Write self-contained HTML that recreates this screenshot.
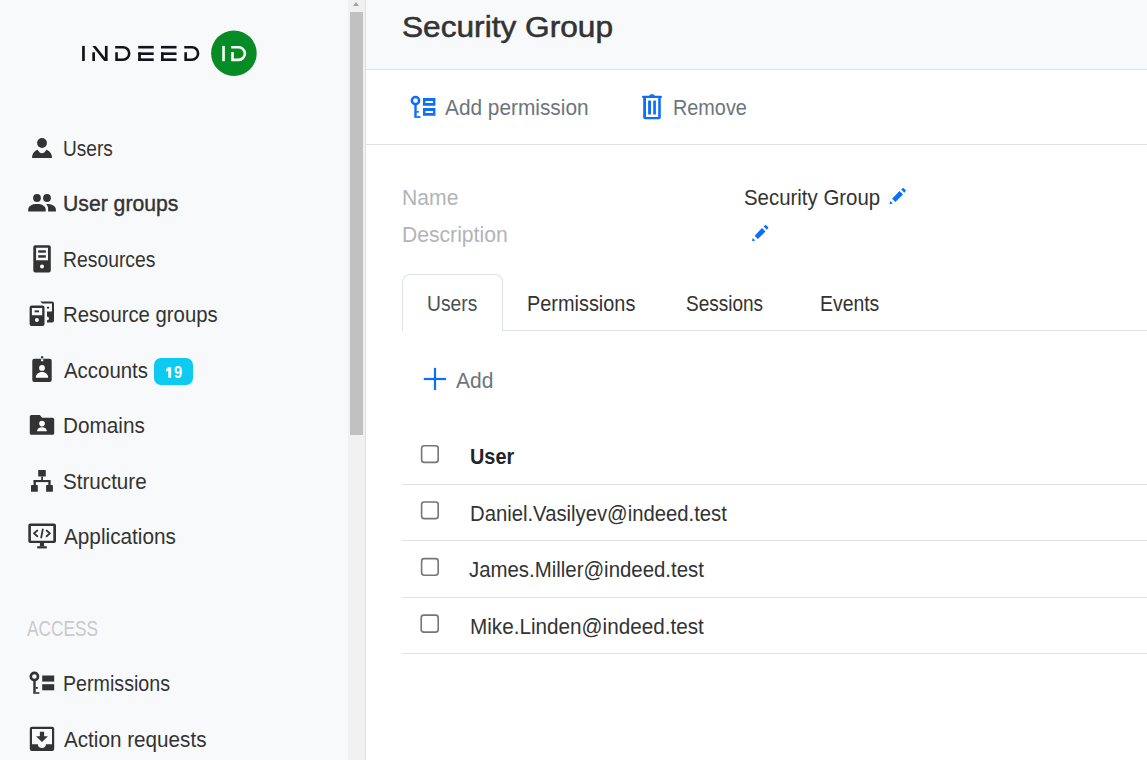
<!DOCTYPE html>
<html><head><meta charset="utf-8"><style>
html,body{margin:0;padding:0;}
body{width:1147px;height:760px;overflow:hidden;position:relative;background:#fff;font-family:"Liberation Sans", sans-serif;}
.t{position:absolute;white-space:nowrap;transform-origin:0 0;}
.b{position:absolute;}
</style></head><body>
<div class="b" style="left:0;top:0;width:348px;height:760px;background:#f8f9fa"></div>
<div class="b" style="left:348px;top:0;width:17px;height:760px;background:#f1f1f1"></div>
<div class="b" style="left:350px;top:12px;width:13px;height:423px;background:#c1c1c1"></div>
<div class="b" style="left:353px;top:2px;width:0;height:0;border-left:3.5px solid transparent;border-right:3.5px solid transparent;border-bottom:4px solid #a3a3a3"></div>
<div class="b" style="left:365px;top:0;width:1px;height:760px;background:#dee2e6"></div>
<div class="b" style="left:366px;top:0;width:781px;height:69px;background:#f8f9fa;border-bottom:1px solid #dee2e6"></div>
<div class="b" style="left:366px;top:144px;width:781px;height:1px;background:#dee2e6"></div>
<div class="b" style="left:402px;top:330px;width:745px;height:1px;background:#dee2e6"></div>
<div class="b" style="left:402px;top:274px;width:99px;height:56px;background:#fff;border:1px solid #dee2e6;border-bottom:none;border-radius:8px 8px 0 0"></div>
<div class="b" style="left:154px;top:358px;width:39px;height:27px;background:#0dcaf0;border-radius:7px"></div>
<div class="b" style="left:402px;top:484px;width:745px;height:1px;background:#dee2e6"></div>
<div class="b" style="left:402px;top:540px;width:745px;height:1px;background:#dee2e6"></div>
<div class="b" style="left:402px;top:597px;width:745px;height:1px;background:#dee2e6"></div>
<div class="b" style="left:402px;top:653px;width:745px;height:1px;background:#dee2e6"></div>
<svg class="b" style="left:0;top:0" width="1147" height="760" viewBox="0 0 1147 760">
<g fill="#333333">
 <!-- Users -->
 <circle cx="42" cy="143" r="4.9"/>
 <path d="M32.1 158 C32.1 153.8 34.3 151 37.6 149.8 C39 152.2 40.4 153.3 42 153.3 C43.6 153.3 45 152.2 46.4 149.8 C49.7 151 52 153.8 52 158 Z"/>
 <!-- User groups -->
 <circle cx="37" cy="198" r="3.9"/>
 <circle cx="47" cy="198" r="3.9"/>
 <path d="M28.2 211.6 L28.2 209.5 C28.2 206 32 204 37 204 C42 204 45.7 206 45.7 209.5 L45.7 211.6 Z"/>
 <path d="M46.1 204 C52 204 55.9 206 55.9 209.5 L55.9 211.6 L48.1 211.6 L48.1 209 C48.1 207 47.4 205.3 46.1 204 Z"/>
 <!-- Resources -->
 <path fill-rule="evenodd" d="M35.3 245.2 H48.8 Q50.8 245.2 50.8 247.2 V270.6 Q50.8 272.6 48.8 272.6 H35.3 Q33.3 272.6 33.3 270.6 V247.2 Q33.3 245.2 35.3 245.2 Z M36.1 247.8 V260.3 H48 V247.8 Z"/>
 <rect x="38.2" y="250.3" width="7.6" height="2.4"/>
 <rect x="38.2" y="255.2" width="7.6" height="2.5"/>
</g>
<circle cx="42" cy="266.4" r="2" fill="#fff"/>
<g fill="#333333">
 <!-- Resource groups back -->
 <path d="M40.3 301.6 H52 Q54 301.6 54 303.6 V320.6 Q54 322.6 52 322.6 H47 V303.5 H42.3 Z"/>
 <!-- front -->
 <path fill-rule="evenodd" d="M31.6 305.4 H42.5 Q44.5 305.4 44.5 307.4 V324 Q44.5 326 42.5 326 H31.6 Q29.6 326 29.6 324 V307.4 Q29.6 305.4 31.6 305.4 Z M31.9 307.9 V315.3 H42.2 V307.9 Z"/>
 <rect x="34.6" y="310.4" width="4.4" height="1.9"/>
</g>
<rect x="47" y="303.5" width="4.9" height="8" fill="#fff"/>
<rect x="47" y="306.8" width="2.2" height="1.8" fill="#333333"/>
<circle cx="36.9" cy="320.1" r="2" fill="#fff"/>
<path d="M47 316.5 A1.9 1.9 0 0 1 47 320.3 Z" fill="#fff"/>
<g fill="#333333">
 <!-- Accounts -->
 <rect x="32.3" y="358.7" width="19.4" height="23.3" rx="2"/>
 <rect x="41" y="356.2" width="2.2" height="2"/>
</g>
<rect x="41" y="359.2" width="2.2" height="2" fill="#fff"/>
<circle cx="42" cy="367.9" r="2.9" fill="#fff"/>
<path d="M35.8 377.7 C35.8 374.4 38.6 372.1 42 372.1 C45.4 372.1 48.2 374.4 48.2 377.7 Z" fill="#fff"/>
<g fill="#333333">
 <!-- Domains -->
 <path d="M31.3 415.1 H39.8 L42.2 417.7 H52.7 Q54.2 417.7 54.2 419.2 V433.2 Q54.2 434.7 52.7 434.7 H31.3 Q29.8 434.7 29.8 433.2 V416.6 Q29.8 415.1 31.3 415.1 Z"/>
</g>
<circle cx="42" cy="423.6" r="2.8" fill="#fff"/>
<path d="M37 431.3 C37 428.8 39.2 427.2 42 427.2 C44.8 427.2 46.9 428.8 46.9 431.3 Z" fill="#fff"/>
<g fill="#333333">
 <!-- Structure -->
 <rect x="38.2" y="469.9" width="7.6" height="6.7" rx="0.6"/>
 <rect x="41.2" y="476.6" width="1.8" height="3.6"/>
 <rect x="33.4" y="480" width="17.2" height="2.1"/>
 <rect x="33.6" y="482" width="2.3" height="3.1"/>
 <rect x="48.3" y="482" width="2.3" height="3.1"/>
 <rect x="31" y="485" width="6.8" height="6.8" rx="0.6"/>
 <rect x="46.1" y="485" width="6.8" height="6.8" rx="0.6"/>
 <!-- Applications -->
 <path fill-rule="evenodd" d="M30.3 523.6 H54 Q56 523.6 56 525.6 V541 Q56 543 54 543 H30.3 Q28.3 543 28.3 541 V525.6 Q28.3 523.6 30.3 523.6 Z M30.9 526 V540.8 H53.3 V526 Z"/>
 <rect x="39.9" y="543" width="4.2" height="3.3"/>
 <rect x="37.2" y="546.2" width="9.6" height="2.2"/>
</g>
<g fill="none" stroke="#333333" stroke-width="1.8" stroke-linecap="round" stroke-linejoin="round">
 <path d="M37.3 530.5 L34 533.4 L37.3 536.3"/>
 <path d="M46.6 530.5 L49.9 533.4 L46.6 536.3"/>
 <path d="M42.8 529.3 L41.2 537.5"/>
</g>
<g fill="#333333">
 <!-- Permissions -->
 <circle cx="34.4" cy="676.5" r="3.6" fill="none" stroke="#333333" stroke-width="2.6"/>
 <rect x="33.3" y="680" width="2.4" height="13.8"/>
 <rect x="35.5" y="687" width="2.3" height="1.8"/>
 <rect x="35.5" y="692.2" width="3.9" height="1.6"/>
 <rect x="42.2" y="675.5" width="12" height="6.1"/>
 <rect x="42.2" y="684.2" width="12" height="6.1"/>
 <!-- Action requests -->
 <path fill-rule="evenodd" d="M31.8 726.7 H52.2 Q54.2 726.7 54.2 728.7 V748.9 Q54.2 750.9 52.2 750.9 H31.8 Q29.8 750.9 29.8 748.9 V728.7 Q29.8 726.7 31.8 726.7 Z M32 728.9 V744.2 H37.9 A4 3.8 0 0 0 45.9 744.2 H52 V728.9 Z"/>
 <path d="M39.9 731.8 H44.1 V736.3 H47.9 L42 742.1 L36.1 736.3 H39.9 Z"/>
</g>
<g fill="#fff" stroke="#767676" stroke-width="1.6">
 <rect x="421.6" y="445.8" width="16.6" height="16.6" rx="2.6"/>
 <rect x="421.6" y="502" width="16.6" height="16.6" rx="2.6"/>
 <rect x="421.6" y="558.6" width="16.6" height="16.6" rx="2.6"/>
 <rect x="421.2" y="615.1" width="17" height="17" rx="2.6"/>
</g>
<path fill="#fff" d="M168.3 367.1 H171.2 V377.8 H168.3 V370.6 L166.1 371.8 V369.3 Z"/>
<!-- toolbar icons blue -->
<g fill="#0d6efd">
 <circle cx="415.5" cy="100.6" r="3.65" fill="none" stroke="#0d6efd" stroke-width="2.5"/>
 <rect x="414.3" y="104" width="2.4" height="13.9"/>
 <rect x="416.5" y="111" width="2.3" height="1.7"/>
 <rect x="416.5" y="116.1" width="3.9" height="1.8"/>
 <path fill-rule="evenodd" d="M423 97.9 H435.4 V105.8 H423 Z M425.4 100.9 V103.1 H433 V100.9 Z"/>
 <path fill-rule="evenodd" d="M423 108 H435.4 V115.7 H423 Z M425.4 111 V113.1 H433 V111 Z"/>
 <!-- trash -->
 <rect x="642" y="95.8" width="20" height="2.3" rx="1"/>
 <path d="M649.3 95.9 Q649.5 94.3 651 94.3 H653 Q654.5 94.3 654.7 95.9 Z"/>
 <path fill-rule="evenodd" d="M643.2 98 H660.8 V117.3 Q660.8 119.3 658.8 119.3 H645.2 Q643.2 119.3 643.2 117.3 Z M646 98 V116.9 H658.2 V98 Z"/>
 <rect x="648.1" y="100.5" width="2.9" height="14.1" rx="0.4"/>
 <rect x="653.2" y="100.5" width="2.7" height="14.1" rx="0.4"/>
 <!-- pencil 1 -->
 <path d="M890.05 201.06 L889.7 204.2 L892.9 203.4 Z"/>
 <path d="M892.1 198.7 L899.5 191.1 L903 194.4 L895.4 202 Z"/>
 <path d="M901.1 189.4 L903.2 187.8 L906 190.5 L904.4 192.7 Z"/>
 <!-- pencil 2 -->
 <g transform="translate(-137.5 37)">
 <path d="M890.05 201.06 L889.7 204.2 L892.9 203.4 Z"/>
 <path d="M892.1 198.7 L899.5 191.1 L903 194.4 L895.4 202 Z"/>
 <path d="M901.1 189.4 L903.2 187.8 L906 190.5 L904.4 192.7 Z"/>
 </g>
 <!-- plus -->
 <rect x="433.9" y="367.9" width="2.2" height="22.2"/>
 <rect x="423.8" y="377.9" width="22.2" height="2.2"/>
</g>
<!-- logo -->
<g fill="#10131a">
 <rect x="82.1" y="45.9" width="2.7" height="15.1"/>
 <rect x="92.3" y="52.3" width="2.7" height="8.7"/>
 <rect x="104.9" y="45.9" width="2.7" height="15.1"/>
 <path d="M92.3 45.9 H95.7 L107.6 61 H104.2 Z"/>
 <rect x="138.2" y="45.9" width="15.5" height="2.6"/>
 <rect x="138.2" y="52.4" width="15.5" height="2.6"/>
 <rect x="138.2" y="58.4" width="15.5" height="2.6"/>
 <rect x="138.2" y="52.4" width="2.7" height="8.6"/>
 <rect x="161" y="45.9" width="15.5" height="2.6"/>
 <rect x="161" y="52.4" width="15.5" height="2.6"/>
 <rect x="161" y="58.4" width="15.5" height="2.6"/>
 <rect x="161" y="52.4" width="2.7" height="8.6"/>
</g>
<g fill="none" stroke="#10131a" stroke-width="2.6" stroke-linecap="butt" stroke-linejoin="miter">
 <path d="M116.55 52.3 V59.7 H122.95 A6.25 6.25 0 0 0 122.95 47.2 H115.2"/>
 <path d="M185.65 52.3 V59.7 H191.85 A6.25 6.25 0 0 0 191.85 47.2 H184.3"/>
</g>
<circle cx="233.9" cy="53.2" r="22.8" fill="#078b24"/>
<g fill="none" stroke="#fff" stroke-width="2.6" stroke-linecap="butt">
 <path d="M223.55 45.9 V61.2"/>
 <path d="M232.5 52 V59.9 H238.55 A6.35 6.35 0 0 0 238.55 47.2 H231.2"/>
</g>
</svg>
<div class="t" style="left:63.13px;top:138.4px;font-size:22px;line-height:22px;font-weight:400;color:#333333;transform:scaleX(0.8679)">Users</div><div class="t" style="left:63.03px;top:192.8px;font-size:22px;line-height:22px;font-weight:400;color:#333333;-webkit-text-stroke:0.4px #333333;transform:scaleX(0.9631)">User groups</div><div class="t" style="left:62.92px;top:249.0px;font-size:22px;line-height:22px;font-weight:400;color:#333333;transform:scaleX(0.8788)">Resources</div><div class="t" style="left:62.88px;top:303.9px;font-size:22px;line-height:22px;font-weight:400;color:#333333;transform:scaleX(0.9229)">Resource groups</div><div class="t" style="left:63.8px;top:359.6px;font-size:22px;line-height:22px;font-weight:400;color:#333333;transform:scaleX(0.9278)">Accounts</div><div class="t" style="left:63.46px;top:415.0px;font-size:22px;line-height:22px;font-weight:400;color:#333333;transform:scaleX(0.942)">Domains</div><div class="t" style="left:62.86px;top:470.8px;font-size:22px;line-height:22px;font-weight:400;color:#333333;transform:scaleX(0.9375)">Structure</div><div class="t" style="left:64.2px;top:526.2px;font-size:22px;line-height:22px;font-weight:400;color:#333333;transform:scaleX(0.9429)">Applications</div><div class="t" style="left:27.4px;top:617.8px;font-size:22px;line-height:22px;font-weight:400;color:#c8c9cb;transform:scaleX(0.7846)">ACCESS</div><div class="t" style="left:63.31px;top:673.0px;font-size:22px;line-height:22px;font-weight:400;color:#333333;transform:scaleX(0.8933)">Permissions</div><div class="t" style="left:64.4px;top:728.7px;font-size:22px;line-height:22px;font-weight:400;color:#333333;transform:scaleX(0.9396)">Action requests</div><div class="t" style="left:174.2px;top:365.0px;font-size:16px;line-height:16px;font-weight:700;color:#ffffff;transform:scaleX(0.9222)">9</div><div class="t" style="left:401.94px;top:12.0px;font-size:30px;line-height:30px;font-weight:400;color:#333333;-webkit-text-stroke:0.54px #333333;transform:scaleX(1.0547)">Security Group</div><div class="t" style="left:445.0px;top:97.3px;font-size:22px;line-height:22px;font-weight:400;color:#6c757d;transform:scaleX(0.947)">Add permission</div><div class="t" style="left:673.09px;top:97.0px;font-size:22px;line-height:22px;font-weight:400;color:#6c757d;transform:scaleX(0.9014)">Remove</div><div class="t" style="left:402.41px;top:187.1px;font-size:22px;line-height:22px;font-weight:400;color:#b0b4b9;transform:scaleX(0.962)">Name</div><div class="t" style="left:402.43px;top:223.6px;font-size:22px;line-height:22px;font-weight:400;color:#b0b4b9;transform:scaleX(0.9599)">Description</div><div class="t" style="left:743.77px;top:186.8px;font-size:22px;line-height:22px;font-weight:400;color:#333333;transform:scaleX(0.9281)">Security Group</div><div class="t" style="left:427.12px;top:292.5px;font-size:22px;line-height:22px;font-weight:400;color:#495057;transform:scaleX(0.875)">Users</div><div class="t" style="left:527.09px;top:292.5px;font-size:22px;line-height:22px;font-weight:400;color:#333333;transform:scaleX(0.9043)">Permissions</div><div class="t" style="left:686.33px;top:292.6px;font-size:22px;line-height:22px;font-weight:400;color:#333333;transform:scaleX(0.8638)">Sessions</div><div class="t" style="left:820.12px;top:292.6px;font-size:22px;line-height:22px;font-weight:400;color:#333333;transform:scaleX(0.8819)">Events</div><div class="t" style="left:456.4px;top:370.0px;font-size:22px;line-height:22px;font-weight:400;color:#6c757d;transform:scaleX(0.9541)">Add</div><div class="t" style="left:469.78px;top:446.1px;font-size:22px;line-height:22px;font-weight:700;color:#212529;transform:scaleX(0.9026)">User</div><div class="t" style="left:469.88px;top:502.8px;font-size:22px;line-height:22px;font-weight:400;color:#333333;transform:scaleX(0.9216)">Daniel.Vasilyev@indeed.test</div><div class="t" style="left:469.4px;top:559.0px;font-size:22px;line-height:22px;font-weight:400;color:#333333;transform:scaleX(0.9268)">James.Miller@indeed.test</div><div class="t" style="left:469.56px;top:616.3px;font-size:22px;line-height:22px;font-weight:400;color:#333333;transform:scaleX(0.9407)">Mike.Linden@indeed.test</div>
</body></html>
